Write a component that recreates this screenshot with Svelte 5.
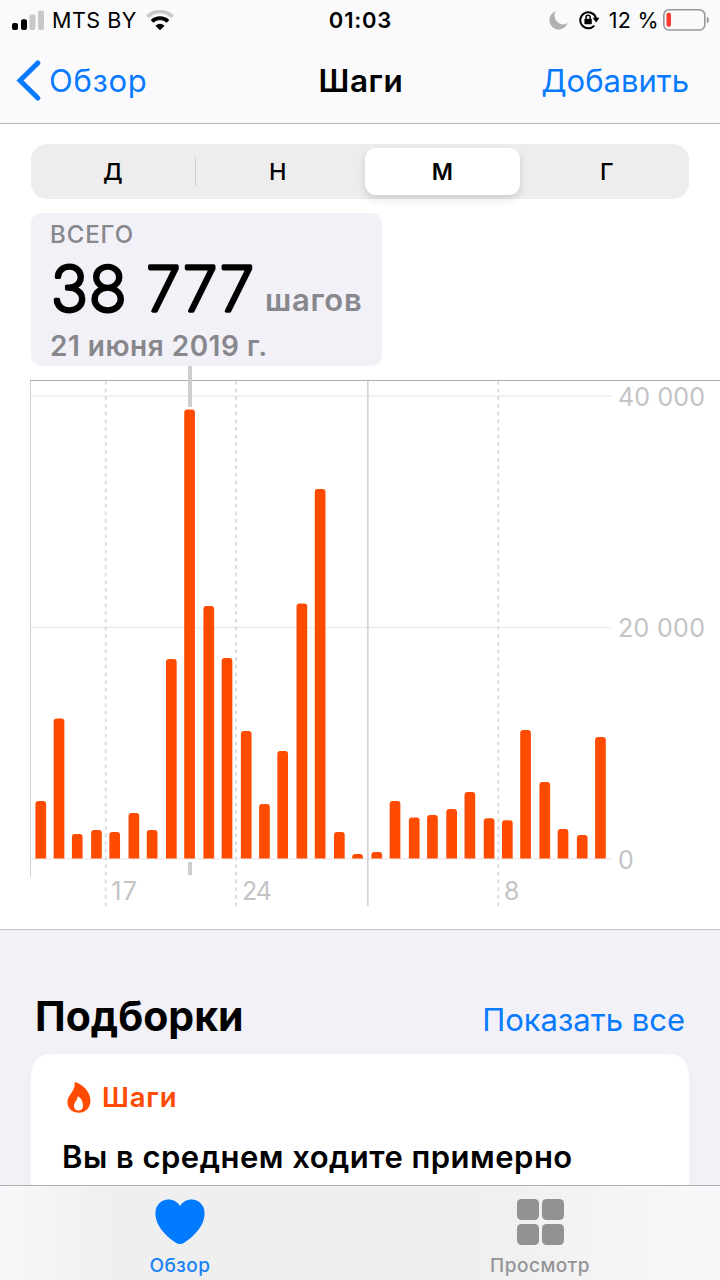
<script lang="ts">
  const BASE = 492.5;

  // height of every day's bar, in chart units
  const days = [
    57.5, 140, 24.5, 28.5, 26.5, 45.5, 28.5, 199.5, 449, 252.5, 200.5, 127.5, 54.5, 107.5, 255, 369.5,
    26.5, 4.5, 6.5, 57.5, 41, 43.5, 49.5, 66.5, 40.2, 38.2, 128.5, 76.5, 29.5, 23.5, 121.5
  ];

  const weeks = [
    { x: 105.7, label: '17', labelX: 111.3, width: 25.5 },
    { x: 236, label: '24', labelX: 242, width: 30 },
    { x: 498.3, label: '8', labelX: 504, width: 15 }
  ];

  const levels = [
    { y: 30.2, label: '40 000', width: 87 },
    { y: 261.5, label: '20 000', width: 87 },
    { y: 492.7, label: '0', width: 15 }
  ];

  const ranges = ['Д', 'Н', 'М', 'Г'];
  let range = 'М';

  // flat sides and foot, rounded top corners
  function bar(i: number, h: number) {
    const x = Math.floor(37 + 19.46 * i) * 0.96 - 0.1;
    const r = Math.min(3, h);
    return `M${x} ${BASE}v${-(h - r)}q0 ${-r} ${r} ${-r}h${10.7 - 2 * r}q${r} 0 ${r} ${r}v${h - r}z`;
  }
</script>

<div class="screen">
  <header>
    <div class="status">
      <div class="status-left">
        <svg width="32" height="21" viewBox="0 0 32 21">
          <rect x="0" y="13" width="6" height="7" rx="2" />
          <rect x="9" y="9.3" width="6" height="10.7" rx="2" />
          <rect class="off" x="17.5" y="4.5" width="6" height="15.5" rx="2" />
          <rect class="off" x="26" y="0.5" width="6" height="19.5" rx="2" />
        </svg>
        <span class="carrier">MTS BY</span>
        <svg width="28" height="21" viewBox="0 0 28 21">
          <path class="wifi off-line" d="M1.6 6.6a18 18 0 0 1 24.8 0" />
          <path class="wifi" d="M6 11.4a11.6 11.6 0 0 1 16 0" />
          <path d="M9.4 15.8q4.6-4 9.2 0L14 20.3z" />
        </svg>
      </div>
      <span class="clock">01:03</span>
      <div class="status-right">
        <svg class="moon" width="19" height="19" viewBox="0 0 19 19">
          <path d="M6.8 0.2A9.4 9.4 0 1 0 18.7 12.1A8.7 8.7 0 0 1 6.8 0.2z" />
        </svg>
        <svg class="lock" width="21" height="20" viewBox="0 0 21 20">
          <path class="ring" d="M15.3 15.6A8 8 0 1 1 17 8.2" />
          <path d="M13.6 7.8h6.8l-3.2 4.8z" />
          <rect x="5.4" y="8.7" width="7.4" height="5.5" rx="0.8" />
          <path class="shackle" d="M7 9V7.4a2.1 2.1 0 0 1 4.2 0V9" />
        </svg>
        <span class="percent">12 %</span>
        <svg width="46" height="22" viewBox="0 0 46 22">
          <rect class="shell" x="0.8" y="0.8" width="41" height="20.2" rx="5.2" />
          <rect class="charge" x="3.5" y="3.7" width="4.5" height="14" rx="1.8" />
          <path class="cap" d="M43.8 7.6q2.2 1 2.2 3.3t-2.2 3.3z" />
        </svg>
      </div>
    </div>

    <nav>
      <a class="back" href="#back">
        <svg width="25" height="41" viewBox="0 0 25 41">
          <path d="M21.8 3 4 20.5 21.8 38" />
        </svg>
        <span>Обзор</span>
      </a>
      <h1>Шаги</h1>
      <a class="add" href="#add">Добавить</a>
    </nav>
  </header>

  <main>
    <div class="segments">
      {#each ranges as item}
        <button class:active={item === range} onclick={() => (range = item)}>{item}</button>
      {/each}
    </div>

    <section class="summary">
      <div class="caption">ВСЕГО</div>
      <div class="total">
        <svg width="204" height="84" viewBox="0 0 204 84">
          <text x="0" y="65.7" textLength="203">38 777</text>
        </svg>
        <span>шагов</span>
      </div>
      <div class="date">21 июня 2019 г.</div>
    </section>

    <svg class="chart" width="720" height="562" viewBox="0 0 720 562">
      <g class="grid">
        {#each levels as level}
          <path d="M31 {level.y}H611" />
        {/each}
      </g>
      <path class="edge" d="M30.5 14V511" />
      <path class="month" d="M367.8 14V540" />
      {#each weeks as week}
        <path class="week" d="M{week.x} 15V540" />
        <text x={week.labelX} y="534" textLength={week.width}>{week.label}</text>
      {/each}
      <path class="top" d="M30 14.5H720" />
      <path class="marker" d="M190 0V41M190 496V509" />
      {#each days as day, i}
        <path class="bar" d={bar(i, day)} />
      {/each}
      {#each levels as level}
        <text x="618" y={level.y + 9.8} textLength={level.width}>{level.label}</text>
      {/each}
    </svg>
  </main>

  <section class="highlights">
    <div class="heading">
      <h2>Подборки</h2>
      <a href="#all">Показать все</a>
    </div>
    <article>
      <div class="kind">
        <svg width="24" height="31" viewBox="0 0 24 31">
          <path
            fill-rule="evenodd"
            d="M7.6 0C16.5 2.2 23.4 10.2 23.4 18.8C23.4 26 18.4 30.8 11.8 30.8C5 30.8 0.4 26.2 0.4 20C0.4 13.2 9 9 7.6 0zM10.8 14.2C10.8 18 7 20 7 24C7 26.8 8.8 28.6 11.5 28.6C14.2 28.6 16 26.8 16 24C16 20 14.4 16 10.8 14.2z"
          />
        </svg>
        <span>Шаги</span>
      </div>
      <p>Вы в среднем ходите примерно</p>
    </article>
  </section>

  <footer>
    <a class="tab current" href="#summary">
      <svg width="50" height="46" viewBox="0 0 50 46">
        <path
          d="M25 7C22 2.6 18 0.6 13.4 0.6C6 0.6 0.4 6.4 0.4 14.4C0.4 26 10 36.4 20.5 43.6Q25 46.6 29.5 43.6C40 36.4 49.6 26 49.6 14.4C49.6 6.4 44 0.6 36.6 0.6C32 0.6 28 2.6 25 7z"
        />
      </svg>
      <span>Обзор</span>
    </a>
    <a class="tab" href="#browse">
      <svg width="47" height="46" viewBox="0 0 47 46">
        <rect x="0" y="0" width="22" height="21" rx="4.5" />
        <rect x="25" y="0" width="22" height="21" rx="4.5" />
        <rect x="0" y="25" width="22" height="21" rx="4.5" />
        <rect x="25" y="25" width="22" height="21" rx="4.5" />
      </svg>
      <span>Просмотр</span>
    </a>
  </footer>
</div>

<style>
  :global(body) {
    background: #f2f1f7;
  }

  .screen {
    width: 720px;
    height: 1280px;
    display: flex;
    flex-direction: column;
    overflow: hidden;
    font-family: Inter, 'Liberation Sans', sans-serif;
    color: #000;
    background: #f2f1f7;
    white-space: nowrap;
  }

  svg {
    display: block;
    flex: none;
  }

  a {
    color: #087aff;
    text-decoration: none;
  }

  header {
    height: 123px;
    flex: none;
    background: #fafafc;
    border-bottom: 1px solid #b5b5b8;
  }

  .status {
    display: grid;
    grid-template-columns: 1fr auto 1fr;
    align-items: center;
    height: 40px;
    padding: 0 11px 0 12px;
  }

  .status-left,
  .status-right {
    display: flex;
    align-items: center;
  }

  .status-right {
    justify-content: flex-end;
  }

  .carrier {
    margin: 0 9px 0 8px;
    font-size: 21.5px;
    letter-spacing: 0.5px;
  }

  .off {
    fill: #c8c8ca;
  }

  .wifi {
    fill: none;
    stroke: #000;
    stroke-width: 3.8;
  }

  .off-line {
    stroke: #c8c8ca;
  }

  .clock {
    font-size: 22px;
    font-weight: 600;
    letter-spacing: 0.8px;
  }

  .moon {
    fill: #b0b0b3;
    margin-right: 11px;
  }

  .lock {
    margin-right: 9px;
  }

  .ring,
  .shackle {
    fill: none;
    stroke: #000;
    stroke-width: 2;
  }

  .shackle {
    stroke-width: 1.5;
  }

  .percent {
    font-size: 21.5px;
    letter-spacing: 0.3px;
    margin-right: 4px;
  }

  .shell {
    fill: none;
    stroke: #98989b;
    stroke-width: 1.6;
  }

  .charge {
    fill: #fb3b30;
  }

  .cap {
    fill: #98989b;
  }

  nav {
    display: grid;
    grid-template-columns: 1fr auto 1fr;
    align-items: center;
    height: 81px;
    padding: 0 16px;
    font-size: 31px;
  }

  .back {
    display: flex;
    align-items: center;
    gap: 8px;
    letter-spacing: 0.7px;
  }

  .back path {
    fill: none;
    stroke: #087aff;
    stroke-width: 5;
    stroke-linecap: round;
    stroke-linejoin: miter;
  }

  h1 {
    margin: 0 0 0 2px;
    font-size: 31.5px;
    font-weight: 600;
    letter-spacing: 0.6px;
  }

  .add {
    padding-right: 15px;
    text-align: right;
  }

  main {
    height: 805px;
    flex: none;
    background: #fff;
    border-bottom: 1px solid #c6c5cb;
  }

  .segments {
    display: grid;
    grid-template-columns: repeat(4, 1fr);
    box-sizing: border-box;
    width: 658px;
    height: 55px;
    margin: 20px 0 0 31px;
    padding: 4px 0;
    border-radius: 16px;
    background: #ededee;
  }

  .segments button {
    margin: 0 5px;
    padding: 0;
    border: 0;
    border-radius: 11px;
    background: none;
    font: 500 23.5px Inter, 'Liberation Sans', sans-serif;
    color: #000;
  }

  .segments button:first-child {
    margin: 9px 0;
    border-right: 1px solid #cdcdd2;
    border-radius: 0;
  }

  .segments .active {
    background: #fff;
    font-size: 23px;
    font-weight: 600;
    box-shadow: 0 4px 9px rgba(0, 0, 0, 0.13);
  }

  .summary {
    box-sizing: border-box;
    width: 351px;
    height: 153px;
    margin: 14px 0 0 31px;
    padding: 8px 20px 0;
    border-radius: 10px;
    background: #f2f1f8;
    color: #87878c;
  }

  .caption {
    margin-left: -1px;
    font-size: 24px;
    line-height: 28px;
    font-weight: 500;
    letter-spacing: 0.9px;
  }

  .total {
    display: flex;
    align-items: flex-end;
    gap: 10px;
    height: 80px;
    margin-top: -4px;
  }

  .total svg {
    align-self: flex-start;
  }

  .total text {
    font-size: 62px;
    font-weight: 200;
    fill: #000;
    stroke: #000;
    stroke-width: 3.6;
    stroke-linejoin: round;
  }

  .total span {
    margin-bottom: 9px;
    font-size: 31px;
    line-height: 32px;
    font-weight: 600;
    letter-spacing: 0.7px;
  }

  .date {
    margin: 4px 0 0 -1px;
    font-size: 28px;
    line-height: 34px;
    font-weight: 600;
    letter-spacing: 0.5px;
  }

  .chart text {
    font-size: 25px;
    fill: #c3c3c6;
  }

  .chart path {
    fill: none;
  }

  .grid path {
    stroke: #ececee;
    stroke-width: 1.5;
  }

  .chart .edge {
    stroke: #d2d2d6;
  }

  .chart .month {
    stroke: #d6d6d9;
    stroke-width: 1.8;
  }

  .chart .week {
    stroke: #d9d9dc;
    stroke-width: 1.8;
    stroke-dasharray: 3.8 3.87;
  }

  .chart .top {
    stroke: #aeaeb1;
  }

  .chart .marker {
    stroke: #cdcdd2;
    stroke-width: 4;
  }

  .chart .bar {
    fill: #ff4b00;
  }

  .highlights {
    flex: 1;
    min-height: 0;
    overflow: hidden;
    padding: 61px 31px 0;
  }

  .heading {
    display: flex;
    justify-content: space-between;
    align-items: baseline;
    height: 63px;
    padding: 0 4px;
  }

  h2 {
    margin: 0;
    font-size: 41px;
    line-height: 50px;
    font-weight: 700;
  }

  .heading a {
    font-size: 31px;
  }

  article {
    height: 200px;
    padding: 27px 31px;
    border-radius: 20px;
    background: #fff;
  }

  .kind {
    display: flex;
    align-items: center;
    gap: 11px;
    height: 32px;
    padding-left: 5px;
    font-size: 27.5px;
    font-weight: 600;
    letter-spacing: 0.8px;
    color: #ff4b00;
    fill: #ff4b00;
  }

  article p {
    margin: 24px 0 0;
    font-size: 31px;
    line-height: 40px;
    font-weight: 600;
    letter-spacing: 0.48px;
  }

  footer {
    display: grid;
    grid-template-columns: 1fr 1fr;
    height: 94px;
    flex: none;
    border-top: 1px solid #b0b0b3;
    background: linear-gradient(90deg, #f8f8fa 0, #efeff0 110px, #efeff0 480px, #f8f8fa 700px);
  }

  .tab {
    display: flex;
    flex-direction: column;
    align-items: center;
    padding-top: 13px;
    font-size: 19px;
    font-weight: 500;
    color: #949496;
    fill: #929292;
  }

  .tab span {
    margin-top: 9px;
    line-height: 24px;
    letter-spacing: 0.5px;
  }

  .tab.current {
    color: #1a82f7;
    fill: #007aff;
  }
</style>
